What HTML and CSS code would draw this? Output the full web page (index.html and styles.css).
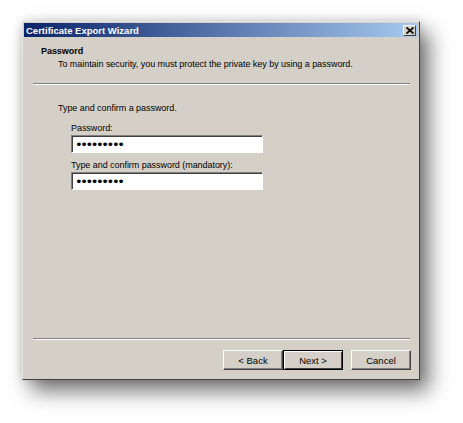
FILE: index.html
```html
<!DOCTYPE html>
<html lang="en">
<head>
    <meta charset="UTF-8">
    <title>Certificate Export Wizard</title>
    <link rel="stylesheet" href="styles.css">
</head>
<body>
    <div class="dialog">
        <div class="titlebar">
            <span class="title">Certificate Export Wizard</span>
            <span class="close-btn">
                <svg width="8" height="7" viewBox="0 0 8 7">
                    <path d="M0.5 0.5 L7.5 6.5 M7.5 0.5 L0.5 6.5" stroke="#000" stroke-width="1.6" fill="none"/>
                </svg>
            </span>
        </div>

        <div class="header">
            <div class="header-title">Password</div>
            <div class="header-desc">To maintain security, you must protect the private key by using a password.</div>
        </div>

        <div class="rule"></div>

        <div class="content">
            <p class="intro">Type and confirm a password.</p>
            <div class="field">
                <label for="pwd">Password:</label>
                <input type="password" id="pwd" value="123456789" readonly>
            </div>
            <div class="field">
                <label for="pwd2">Type and confirm password (mandatory):</label>
                <input type="password" id="pwd2" value="123456789" readonly>
            </div>
        </div>

        <div class="rule"></div>

        <div class="buttons">
            <button class="btn">&lt; Back</button>
            <button class="btn btn-default">Next &gt;</button>
            <button class="btn btn-cancel">Cancel</button>
        </div>
    </div>
</body>
</html>
```

FILE: styles.css
```css
body {
    margin: 0;
    padding: 21px 0 0 22px;
    min-height: 423px;
    box-sizing: border-box;
    background-color: #fff;
    font-family: "Liberation Sans", Arial, sans-serif;
    font-size: 9px;
    letter-spacing: -0.05px;
    color: #000;
}

.dialog {
    box-sizing: border-box;
    width: 398px;
    height: 359px;
    background-color: #d4d0c8;
    border-top: 1px solid #e8e6e0;
    border-left: 1px solid #e8e6e0;
    border-right: 1px solid #404040;
    border-bottom: 1px solid #404040;
    padding: 1px;
    display: flex;
    flex-direction: column;
    box-shadow: 9px 11px 20px rgba(0, 0, 0, 0.55), 0 0 10px rgba(0, 0, 0, 0.15);
}

.titlebar {
    height: 14px;
    display: flex;
    align-items: center;
    justify-content: space-between;
    background: linear-gradient(to right, #0a246a, #a6caf0);
    padding: 0 2px 0 2px;
}

.title {
    color: #fff;
    font-weight: bold;
    font-size: 9.5px;
    letter-spacing: 0;
}

.close-btn {
    box-sizing: border-box;
    width: 13px;
    height: 11px;
    display: flex;
    align-items: center;
    justify-content: center;
    background-color: #d4d0c8;
    border-top: 1px solid #fff;
    border-left: 1px solid #fff;
    border-right: 1px solid #404040;
    border-bottom: 1px solid #404040;
}

.header {
    padding: 8px 0 0 17px;
    line-height: 13px;
}

.header-title {
    font-weight: bold;
}

.header-desc {
    padding-left: 17px;
}

.rule {
    margin: 12px 8px 0 9px;
    border-top: 1px solid #808080;
    border-bottom: 1px solid #fff;
}

.content {
    flex: 1;
    padding: 17px 0 0 34px;
    line-height: 13px;
}

.intro {
    margin: 0 0 7px 0;
}

.field {
    padding-left: 13px;
    margin-bottom: 6px;
}

.field label {
    display: block;
}

.field input {
    box-sizing: border-box;
    width: 192px;
    height: 18px;
    margin: 0;
    padding: 0 0 0 3px;
    background-color: #fff;
    border-top: 1px solid #808080;
    border-left: 1px solid #808080;
    border-right: 1px solid #fff;
    border-bottom: 1px solid #fff;
    box-shadow: inset 1px 1px 0 #404040;
    font-family: "DejaVu Sans", sans-serif;
    font-size: 13px;
    letter-spacing: -2.4px;
    outline: none;
}

.buttons {
    display: flex;
    justify-content: flex-end;
    padding: 10px 7px 8px 0;
}

.btn {
    box-sizing: border-box;
    width: 60px;
    height: 20px;
    padding: 0;
    background-color: #d4d0c8;
    border-top: 1px solid #fff;
    border-left: 1px solid #fff;
    border-right: 1px solid #404040;
    border-bottom: 1px solid #404040;
    box-shadow: inset -1px -1px 0 #808080;
    font-family: "Liberation Sans", Arial, sans-serif;
    font-size: 9.5px;
    color: #000;
}

.btn-default {
    border: 1px solid #000;
    box-shadow: inset 1px 1px 0 #fff, inset -1px -1px 0 #404040;
}

.btn-cancel {
    margin-left: 8px;
}
```
